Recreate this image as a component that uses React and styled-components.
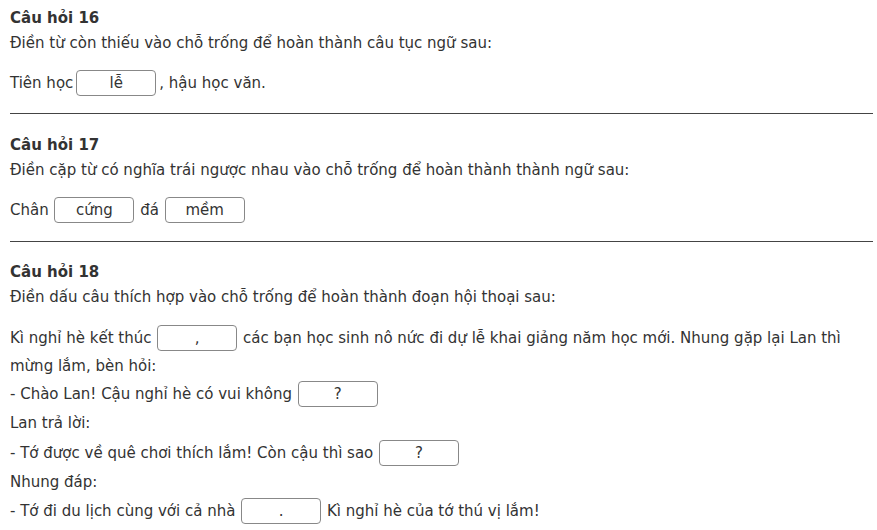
import React from "react";
import styled, { createGlobalStyle } from "styled-components";

const GlobalStyle = createGlobalStyle`
  html, body {
    margin: 0;
    padding: 0;
    background: #fff;
  }
  body {
    font-family: "DejaVu Sans", Verdana, sans-serif;
    font-size: 15px;
    color: #333;
  }
`;

const Page = styled.div`
  padding: 0 4px 0 10px;
`;

const Question = styled.section`
  padding-top: ${(p) => p.top}px;
  padding-bottom: ${(p) => p.bottom}px;
  border-bottom: ${(p) => (p.last ? "none" : "1px solid #444")};
`;

const Title = styled.div`
  font-weight: bold;
  line-height: 25px;
  margin-top: 1px;
`;

const Desc = styled.div`
  line-height: 25px;
`;

const Answer = styled.div`
  margin-top: ${(p) => p.gap || 14}px;
`;

const Row = styled.div`
  display: flex;
  align-items: center;
  height: ${(p) => p.h || 26}px;
  white-space: pre;
`;

const Blank = styled.span`
  display: inline-flex;
  align-items: center;
  justify-content: center;
  width: 78px;
  height: 24px;
  border: 1px solid #888;
  border-radius: 4px;
  margin: 0 ${(p) => p.m ?? 1}px;
  color: #333;
`;

export default function App() {
  return (
    <>
      <GlobalStyle />
      <Page>
        <Question top={5} bottom={17}>
          <Title>Câu hỏi 16</Title>
          <Desc>Điền từ còn thiếu vào chỗ trống để hoàn thành câu tục ngữ sau:</Desc>
          <Answer>
            <Row>
              Tiên học<Blank m={3}>lễ</Blank>, hậu học văn.
            </Row>
          </Answer>
        </Question>
        <Question top={18} bottom={18}>
          <Title>Câu hỏi 17</Title>
          <Desc>Điền cặp từ có nghĩa trái ngược nhau vào chỗ trống để hoàn thành thành ngữ sau:</Desc>
          <Answer>
            <Row>
              Chân <Blank>cứng</Blank> đá <Blank>mềm</Blank>
            </Row>
          </Answer>
        </Question>
        <Question top={17} bottom={0} last>
          <Title>Câu hỏi 18</Title>
          <Desc>Điền dấu câu thích hợp vào chỗ trống để hoàn thành đoạn hội thoại sau:</Desc>
          <Answer gap={15}>
            <Row>
              Kì nghỉ hè kết thúc <Blank>,</Blank> các bạn học sinh nô nức đi dự lễ khai giảng năm học mới. Nhung gặp lại Lan thì
            </Row>
            <Row h={29}>mừng lắm, bèn hỏi:</Row>
            <Row h={28}>
              - Chào Lan! Cậu nghỉ hè có vui không <Blank>?</Blank>
            </Row>
            <Row h={30}>Lan trả lời:</Row>
            <Row h={29}>
              - Tớ được về quê chơi thích lắm! Còn cậu thì sao <Blank>?</Blank>
            </Row>
            <Row h={29}>Nhung đáp:</Row>
            <Row h={29}>
              - Tớ đi du lịch cùng với cả nhà <Blank>.</Blank> Kì nghỉ hè của tớ thú vị lắm!
            </Row>
          </Answer>
        </Question>
      </Page>
    </>
  );
}
